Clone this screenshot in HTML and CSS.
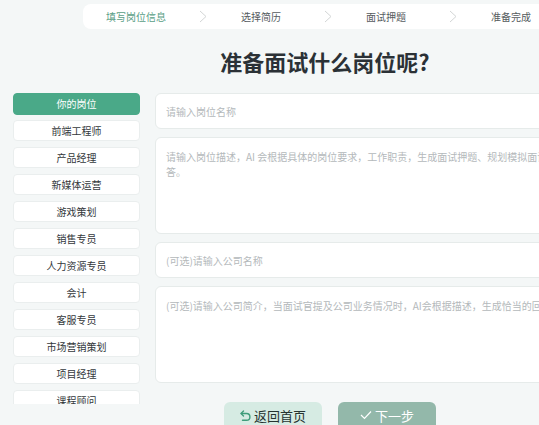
FILE: index.html
```html
<!DOCTYPE html>
<html lang="zh-CN">
<head>
<meta charset="utf-8">
<title>准备面试</title>
<link rel="stylesheet" href="styles.css">
</head>
<body>
<div class="page">
  <nav class="steps">
    <div class="step active"><span class="label">填写岗位信息</span><span class="chev"><svg width="8" height="13" viewBox="0 0 8 13"><path d="M1 1l6 5.5L1 12" fill="none" stroke="#d3d6d6" stroke-width="1"/></svg></span></div>
    <div class="step"><span class="label">选择简历</span><span class="chev"><svg width="8" height="13" viewBox="0 0 8 13"><path d="M1 1l6 5.5L1 12" fill="none" stroke="#d3d6d6" stroke-width="1"/></svg></span></div>
    <div class="step"><span class="label">面试押题</span><span class="chev"><svg width="8" height="13" viewBox="0 0 8 13"><path d="M1 1l6 5.5L1 12" fill="none" stroke="#d3d6d6" stroke-width="1"/></svg></span></div>
    <div class="step last"><span class="label">准备完成</span></div>
  </nav>
  <h1 class="title">准备面试什么岗位呢?</h1>
  <div class="main">
    <ul class="roles">
      <li class="role active">你的岗位</li>
      <li class="role">前端工程师</li>
      <li class="role">产品经理</li>
      <li class="role">新媒体运营</li>
      <li class="role">游戏策划</li>
      <li class="role">销售专员</li>
      <li class="role">人力资源专员</li>
      <li class="role">会计</li>
      <li class="role">客服专员</li>
      <li class="role">市场营销策划</li>
      <li class="role">项目经理</li>
      <li class="role">课程顾问</li>
    </ul>
    <div class="form">
      <input class="field" type="text" placeholder="请输入岗位名称">
      <textarea class="area" placeholder="请输入岗位描述，AI 会根据具体的岗位要求，工作职责，生成面试押题、规划模拟面试、生成面试回&#10;答。"></textarea>
      <input class="field" type="text" placeholder="(可选)请输入公司名称">
      <textarea class="area" placeholder="(可选)请输入公司简介，当面试官提及公司业务情况时，AI会根据描述，生成恰当的回答。"></textarea>
      <div class="actions">
        <button class="btn back"><svg class="ico" width="11" height="12" viewBox="0 0 11 12"><path d="M3.5 1L1 3.5 3.5 6" fill="none" stroke="#3f9c7a" stroke-width="1.4" stroke-linecap="round" stroke-linejoin="round"/><path d="M1.3 3.5H6.5a3.4 3.4 0 0 1 0 6.8H2.5" fill="none" stroke="#3f9c7a" stroke-width="1.4" stroke-linecap="round"/></svg>返回首页</button>
        <button class="btn next"><svg class="ico" width="12" height="10" viewBox="0 0 12 10"><path d="M1 5l3.5 3.5L11 1.5" fill="none" stroke="#ffffff" stroke-width="1.2"/></svg>下一步</button>
      </div>
    </div>
  </div>
</div>
</body>
</html>
```
FILE: styles.css
```css
* { box-sizing: border-box; }
html, body {
  margin: 0;
  padding: 0;
  overflow: hidden;
  background: #f4f7f7;
  font-family: "Noto Sans CJK SC", "Noto Sans", sans-serif;
}
.page {
  width: 660px;
  padding-top: 4px;
}
.steps {
  margin-left: 83px;
  width: 484px;
  height: 25px;
  background: #ffffff;
  border-radius: 8px;
  display: flex;
  align-items: center;
}
.step {
  width: 125px;
  display: flex;
  align-items: center;
  flex-shrink: 0;
}
.step.last { width: 106px; }
.label {
  width: 106px;
  text-align: center;
  font-size: 10px;
  line-height: 14px;
  color: #555b5e;
}
.step.active .label { color: #5a9e86; }
.chev {
  width: 19px;
  display: flex;
  justify-content: flex-end;
  padding-right: 1px;
}
.chev svg { display: block; }
.title {
  margin: 17px 0 17px 83px;
  width: 484px;
  text-align: center;
  font-size: 22px;
  line-height: 30px;
  font-weight: 700;
  color: #2b3136;
}
.main {
  display: flex;
  gap: 15px;
  padding-left: 13px;
}
.roles {
  list-style: none;
  margin: 0;
  padding: 0;
  width: 127px;
  height: 311px;
  overflow: hidden;
  display: flex;
  flex-direction: column;
  gap: 6px;
  flex-shrink: 0;
}
.role {
  flex-shrink: 0;
  height: 21px;
  line-height: 19px;
  background: #ffffff;
  border: 1px solid #eaeeee;
  border-radius: 4px;
  text-align: center;
  font-size: 10px;
  color: #33383b;
}
.role.active {
  background: #4aa988;
  border-color: #4aa988;
  color: #ffffff;
  height: 22px;
  line-height: 20px;
  margin-bottom: -1px;
}
.form {
  width: 480px;
  display: flex;
  flex-direction: column;
  gap: 8px;
  flex-shrink: 0;
}
.field, .area {
  display: block;
  width: 100%;
  background: #ffffff;
  border: 1px solid #e6ebea;
  border-radius: 6px;
  font-family: "Noto Sans CJK SC", "Noto Sans", sans-serif;
  font-size: 10px;
  color: #333;
  outline: none;
}
.field {
  height: 36px;
  padding: 0 10px;
}
.area {
  height: 97px;
  padding: 11px 10px;
  line-height: 15px;
  resize: none;
  white-space: pre-wrap;
}
.field::placeholder, .area::placeholder { color: #b4b9bb; }
.actions {
  display: flex;
  gap: 16px;
  margin-top: 11px;
  padding-left: 69px;
}
.btn {
  width: 98px;
  height: 30px;
  border: none;
  border-radius: 6px;
  font-family: "Noto Sans CJK SC", "Noto Sans", sans-serif;
  font-size: 13px;
  display: flex;
  align-items: flex-start;
  justify-content: center;
  padding-top: 4px;
  gap: 3px;
}
.btn .ico { margin-top: 4px; }
.btn.back {
  background: #d6ebe3;
  color: #263330;
}
.btn.next {
  background: #93b8aa;
  color: #ffffff;
}
```
